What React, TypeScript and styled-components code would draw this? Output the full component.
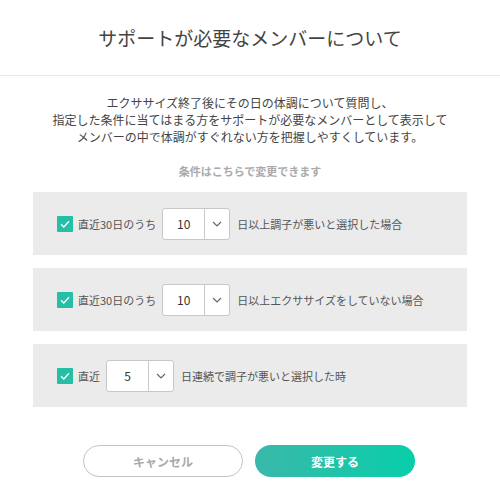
import styled, { createGlobalStyle } from "styled-components";

const GlobalStyle = createGlobalStyle`
    body{
        margin:0;
        background:#fff;
        font-family:"Noto Sans CJK JP", "Noto Sans", sans-serif;
        color:#444;
    }
`

const conditions = [
    { id: 1, before: "直近30日のうち", value: "10", after: "日以上調子が悪いと選択した場合" },
    { id: 2, before: "直近30日のうち", value: "10", after: "日以上エクササイズをしていない場合" },
    { id: 3, before: "直近", value: "5", after: "日連続で調子が悪いと選択した時" },
]

const Check = () => (
    <StyledCheck>
        <svg width="10" height="8" viewBox="0 0 10 8">
            <path d="M1 4.2 L3.8 7 L9 1.2" fill="none" stroke="#fff" strokeWidth="1.3" />
        </svg>
    </StyledCheck>
)

const Select = ({value}:{value:string}) => (
    <StyledSelect>
        <SelectValue>{value}</SelectValue>
        <SelectArrow>
            <svg width="10" height="6" viewBox="0 0 10 6">
                <path d="M1 1 L5 5 L9 1" fill="none" stroke="#666" strokeWidth="1.2" />
            </svg>
        </SelectArrow>
    </StyledSelect>
)

export default function App(){
    return (
        <>
            <GlobalStyle />
            <Modal>
                <Header>
                    <Title>サポートが必要なメンバーについて</Title>
                </Header>
                <Content>
                    <Description>
                        エクササイズ終了後にその日の体調について質問し、<br />
                        指定した条件に当てはまる方をサポートが必要なメンバーとして表示して<br />
                        メンバーの中で体調がすぐれない方を把握しやすくしています。
                    </Description>
                    <SubHeading>条件はこちらで変更できます</SubHeading>
                    <PanelList>
                        {conditions.map(c => (
                            <Panel key={c.id}>
                                <Check />
                                <Label>{c.before}</Label>
                                <Select value={c.value} />
                                <Label>{c.after}</Label>
                            </Panel>
                        ))}
                    </PanelList>
                    <Actions>
                        <Button variant="cancel">キャンセル</Button>
                        <Button variant="submit">変更する</Button>
                    </Actions>
                </Content>
            </Modal>
        </>
    )
}

const Modal = styled.div`
    width:500px;
    height:500px;
    display:flex;
    flex-direction:column;
`

const Header = styled.header`
    height:76px;
    display:flex;
    align-items:center;
    justify-content:center;
    border-bottom:1px solid #e8e8e8;
    box-sizing:border-box;
`

const Title = styled.h1`
    margin:0;
    font-size:19px;
    font-weight:400;
    color:#444;
`

const Content = styled.section`
    display:flex;
    flex-direction:column;
    align-items:center;
    padding-top:18px;
`

const Description = styled.p`
    margin:0;
    text-align:center;
    font-size:12px;
    line-height:17px;
    color:#444;
`

const SubHeading = styled.p`
    margin:18px 0 0;
    font-size:11px;
    line-height:16px;
    font-weight:700;
    color:#aaa;
`

const PanelList = styled.div`
    display:flex;
    flex-direction:column;
    gap:13px;
    width:434px;
    margin-top:13px;
`

const Panel = styled.div`
    height:63px;
    background:#ebebeb;
    display:flex;
    align-items:center;
    padding-left:24px;
    box-sizing:border-box;
`

const StyledCheck = styled.span`
    width:16px;
    height:16px;
    background:#25bfa6;
    border-radius:1px;
    display:flex;
    align-items:center;
    justify-content:center;
    margin-right:5px;
`

const Label = styled.span`
    font-size:11px;
    color:#555;
    white-space:nowrap;
`

const StyledSelect = styled.div`
    width:68px;
    height:32px;
    box-sizing:border-box;
    background:#fff;
    border:1px solid #c8c8c8;
    border-radius:3px;
    display:flex;
    margin:0 7px 0 6px;
`

const SelectValue = styled.span`
    flex:1;
    display:flex;
    align-items:center;
    justify-content:center;
    font-size:12px;
    color:#333;
    border-right:1px solid #c8c8c8;
`

const SelectArrow = styled.span`
    width:24px;
    display:flex;
    align-items:center;
    justify-content:center;
`

const Actions = styled.div`
    display:flex;
    gap:12px;
    margin-top:38px;
    margin-left:-2px;
`

const Button = styled.button<{variant:"cancel"|"submit"}>`
    width:160px;
    height:32px;
    border-radius:16px;
    font-family:inherit;
    font-size:12px;
    font-weight:700;
    cursor:pointer;
    box-sizing:border-box;
    border:${p => p.variant === "cancel" ? "1px solid #c4c4c4" : "none"};
    background:${p => p.variant === "cancel" ? "#fff" : "linear-gradient(90deg, #3ab8aa, #08cea9)"};
    color:${p => p.variant === "cancel" ? "#aaa" : "#fff"};
`
